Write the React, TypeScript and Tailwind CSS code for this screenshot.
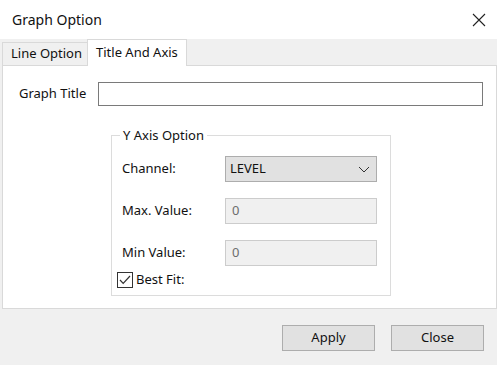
import React from 'react';

const font = { fontFamily: '"Noto Sans", "Liberation Sans", sans-serif' };

function Chevron() {
  return (
    <svg width="12" height="7" viewBox="0 0 12 7" fill="none">
      <path d="M1 1l5 5 5-5" stroke="#333" strokeWidth="1" />
    </svg>
  );
}

export default function App() {
  return (
    <div
      className="w-[500px] h-[367px] flex flex-col bg-white text-[13px] text-[#111] overflow-hidden"
      style={font}
    >
      {/* Title bar */}
      <div className="h-[39px] flex items-center justify-between pl-[12px] pr-[14px]">
        <span className="text-[14px] leading-none">Graph Option</span>
        <svg width="14" height="14" viewBox="0 0 14 14" fill="none">
          <path d="M1 1l12 12M13 1L1 13" stroke="#222" strokeWidth="1.1" />
        </svg>
      </div>

      <div className="flex-1 flex flex-col bg-[#f0f0f0] mr-[3px] mb-[2px]">
        {/* Tabs */}
        <div className="flex items-end h-[26px] pl-[2px]">
          <div className="h-[23px] pl-[8px] pr-[5px] flex items-center border border-b-0 border-r-0 border-[#d9d9d9] bg-[#f0f0f0]">
            Line Option
          </div>
          <div className="h-[27px] -mb-[1px] px-[8px] flex items-center border border-b-0 border-[#d9d9d9] bg-white relative z-10">
            Title And Axis
          </div>
        </div>

        {/* Tab panel */}
        <div className="ml-[2px] mr-[0px] h-[244px] bg-white border border-[#d9d9d9] pt-[16px] pl-[16px] pr-[13px]">
          <div className="flex items-center h-[24px]">
            <span className="w-[79px]">Graph Title</span>
            <div className="flex-1 h-[24px] border border-[#7a7a7a] bg-white" />
          </div>

          <fieldset className="ml-[92px] w-[280px] mt-[20px] border border-[#dcdcdc] pl-[10px] pb-[7px]">
            <legend className="px-[3px] ml-[-2px] leading-[18px]">Y Axis Option</legend>

            <div className="flex items-center h-[26px] mt-[12px]">
              <span className="w-[103px]">Channel:</span>
              <div className="w-[152px] h-[26px] bg-[#e1e1e1] border border-[#adadad] flex items-center justify-between pl-[4px] pr-[6px]">
                <span>LEVEL</span>
                <Chevron />
              </div>
            </div>

            <div className="flex items-center h-[26px] mt-[16px]">
              <span className="w-[103px]">Max. Value:</span>
              <div className="w-[152px] h-[26px] bg-[#f0f0f0] border border-[#cccccc] flex items-center pl-[6px] text-[#6d6d6d]">
                0
              </div>
            </div>

            <div className="flex items-center h-[26px] mt-[16px]">
              <span className="w-[103px]">Min Value:</span>
              <div className="w-[152px] h-[26px] bg-[#f0f0f0] border border-[#cccccc] flex items-center pl-[6px] text-[#6d6d6d]">
                0
              </div>
            </div>

            <div className="flex items-center h-[16px] mt-[6px] ml-[-5px] gap-[3px]">
              <svg width="16" height="16" viewBox="0 0 16 16" fill="none">
                <rect x="0.5" y="0.5" width="15" height="15" fill="white" stroke="#333" />
                <path d="M3 8l3.2 3.4L13 4" stroke="#333" strokeWidth="1.2" />
              </svg>
              <span>Best Fit:</span>
            </div>
          </fieldset>
        </div>

        {/* Footer */}
        <div className="flex justify-end gap-[16px] pr-[13px] pt-[16px]">
          <button className="w-[93px] h-[26px] bg-[#e1e1e1] border border-[#adadad]">Apply</button>
          <button className="w-[93px] h-[26px] bg-[#e1e1e1] border border-[#adadad]">Close</button>
        </div>
      </div>
    </div>
  );
}
